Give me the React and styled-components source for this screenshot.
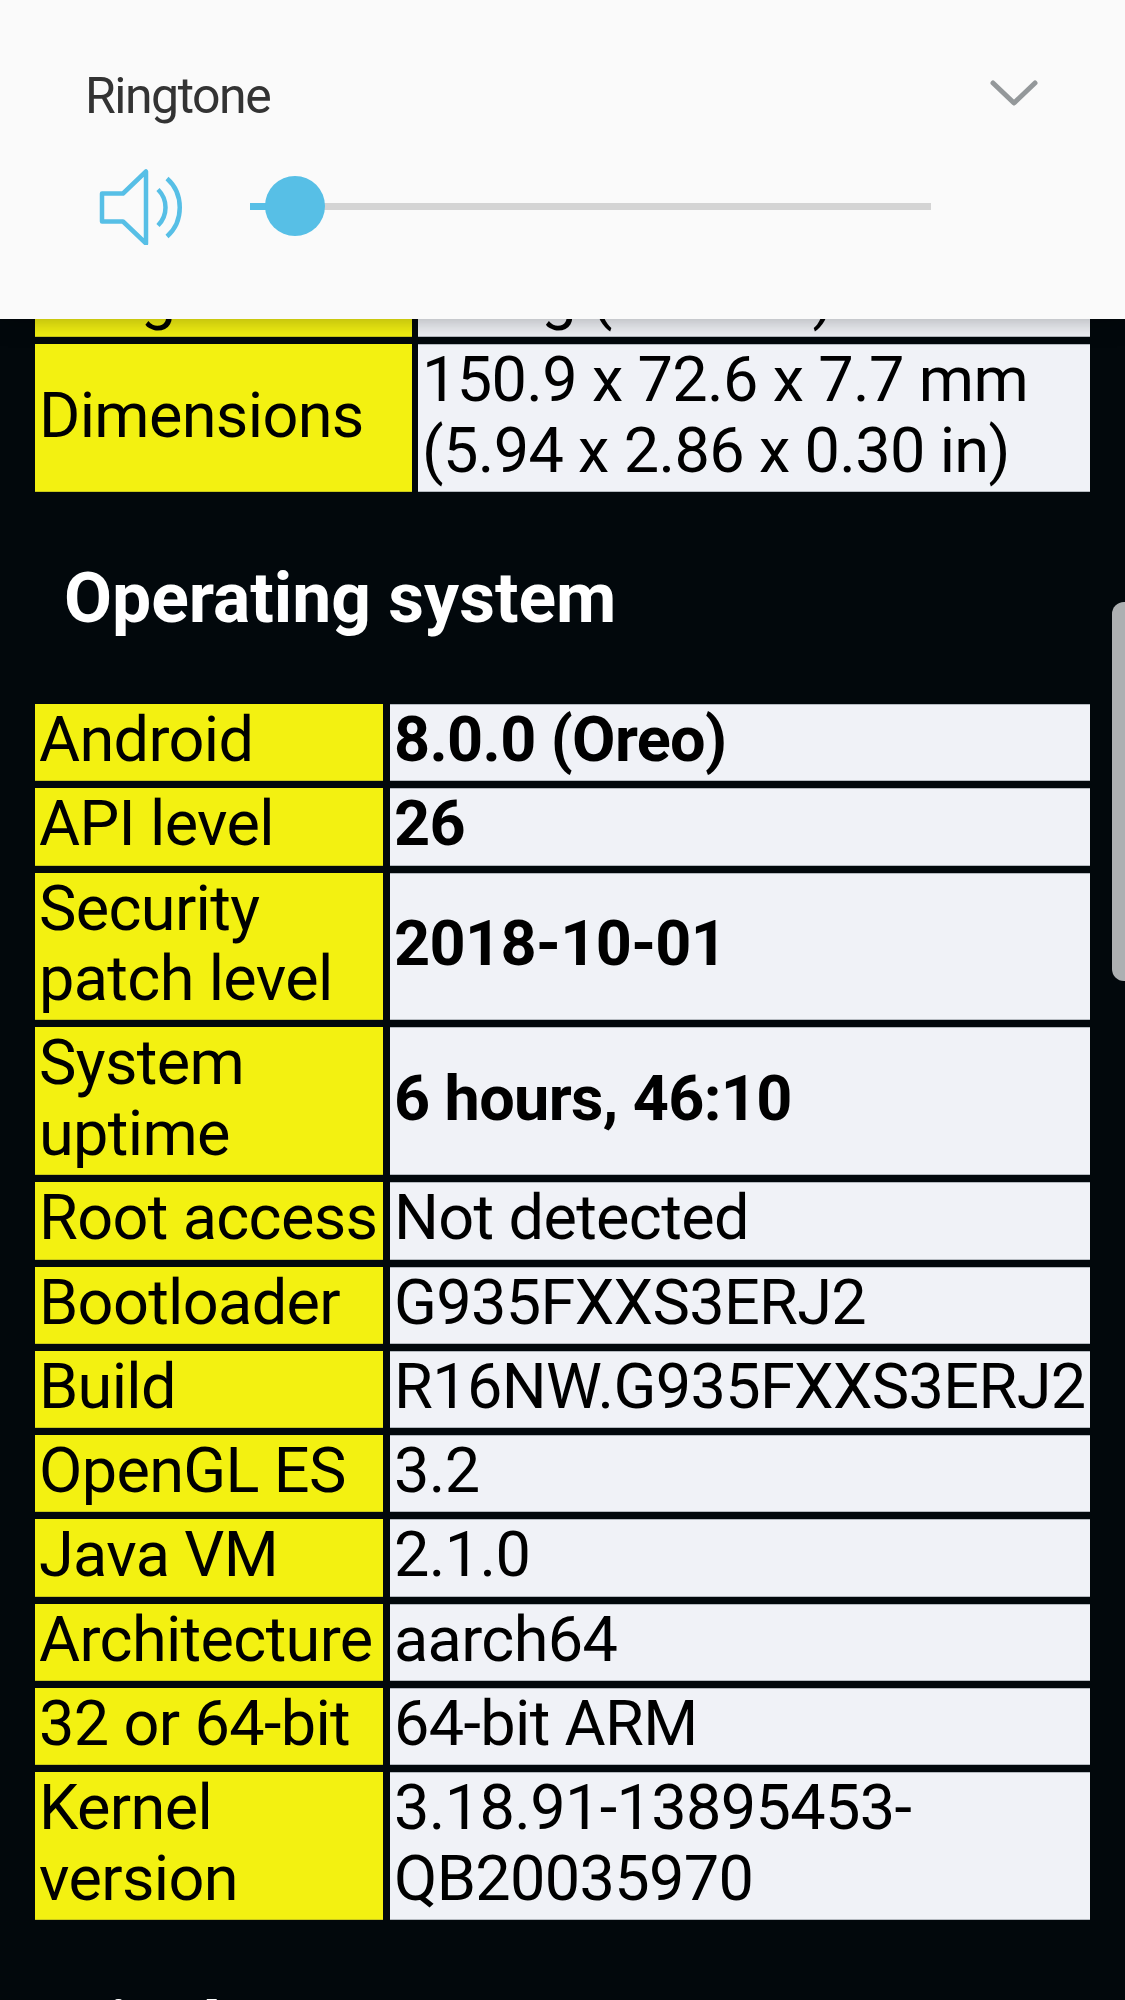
import React from 'react';
import styled, { createGlobalStyle } from 'styled-components';

const GlobalStyle = createGlobalStyle`
  html, body {
    margin: 0;
    padding: 0;
    background: #02080c;
  }
`;

const Screen = styled.div`
  position: relative;
  width: 1125px;
  height: 2000px;
  overflow: hidden;
  background: #02080c;
  font-family: Roboto, "Liberation Sans", sans-serif;
`;

const VolumePanel = styled.div`
  position: absolute;
  top: 0;
  left: 0;
  right: 0;
  height: 319px;
  z-index: 2;
  box-sizing: border-box;
  padding: 66px 86px 0 85px;
  background: #fafafa;
  box-shadow: 0 0 24px rgba(0, 0, 0, 0.35);
`;

const PanelHead = styled.div`
  display: flex;
  justify-content: space-between;
  align-items: flex-start;
`;

const StreamName = styled.div`
  font-size: 50px;
  line-height: 56px;
  letter-spacing: -1.5px;
  color: #333;
  padding-top: 2px;
`;

const Chevron = styled.svg`
  width: 50px;
  height: 28px;
  margin-top: 13px;
`;

const SliderRow = styled.div`
  display: flex;
  align-items: center;
  margin: 43px 0 0 14px;
`;

const SpeakerIcon = styled.svg`
  width: 84px;
  height: 78px;
  flex: none;
`;

const Track = styled.div`
  position: relative;
  width: 681px;
  height: 7px;
  margin-left: 67px;
  background: #d4d4d4;
`;

const TrackFill = styled.div`
  height: 100%;
  width: 45px;
  background: #57bfe6;
`;

const Thumb = styled.div`
  position: absolute;
  left: 15px;
  top: -27px;
  width: 60px;
  height: 60px;
  border-radius: 50%;
  background: #57bfe6;
`;

const Page = styled.div`
  padding: 260px 35px 0;
`;

const SpecTable = styled.div`
  display: flex;
  flex-direction: column;
  gap: 7px;
`;

const SpecRow = styled.div`
  display: grid;
  grid-template-columns: ${(p) => p.$labelWidth}px minmax(0, 1fr);
  gap: ${(p) => p.$gap}px;
`;

const Cell = styled.div`
  display: flex;
  align-items: center;
  box-sizing: border-box;
  padding: 1px 2px 5.8px 4px;
  font-size: 63px;
  line-height: 70.5px;
  letter-spacing: -0.65px;
  color: #000;
`;

const Label = styled(Cell)`
  background: #f3f111;
  box-shadow: inset 0 -1px 0 #c9c81a;
`;

const Value = styled(Cell)`
  background: #f0f2f7;
  font-weight: ${(p) => (p.$bold ? 700 : 400)};
  box-shadow: inset 0 1px 0 #b5bac0, inset 0 -1px 0 #b5bac0;
`;

const SectionTitle = styled.h2`
  margin: 0;
  padding: 66px 0 65px 29px;
  font-size: 69.6px;
  line-height: 81px;
  font-weight: 700;
  color: #fff;

  &:last-child {
    padding-top: 67px;
  }
`;

const ScrollHandle = styled.div`
  position: absolute;
  top: 602px;
  right: 0;
  width: 13px;
  height: 379px;
  border-radius: 12px 0 0 12px;
  background: #adb0b2;
`;

const deviceRows = [
  ['Weight', '157 g (5.54 oz)'],
  ['Dimensions', <>150.9 x 72.6 x 7.7 mm<br />(5.94 x 2.86 x 0.30 in)</>],
];

const systemRows = [
  ['Android', '8.0.0 (Oreo)', true],
  ['API level', '26', true],
  ['Security patch level', '2018-10-01', true],
  ['System uptime', '6 hours, 46:10', true],
  ['Root access', 'Not detected'],
  ['Bootloader', 'G935FXXS3ERJ2'],
  ['Build', 'R16NW.G935FXXS3ERJ2'],
  ['OpenGL ES', '3.2'],
  ['Java VM', '2.1.0'],
  ['Architecture', 'aarch64'],
  ['32 or 64-bit', '64-bit ARM'],
  ['Kernel version', '3.18.91-13895453-QB20035970'],
];

const App = () => (
  <Screen>
    <GlobalStyle />
    <VolumePanel>
      <PanelHead>
        <StreamName>Ringtone</StreamName>
        <Chevron viewBox="0 0 50 28" fill="none">
          <path d="M4 4 L25 24 L46 4" stroke="#94989a" strokeWidth="5" strokeLinecap="round" strokeLinejoin="round" />
        </Chevron>
      </PanelHead>
      <SliderRow>
        <SpeakerIcon viewBox="0 -2.5 84 78" fill="none" stroke="#57bfe6" strokeWidth="4.5" strokeLinejoin="round">
          <path d="M3 24 H24 L47 2 V74 L24 52 H3 Z" />
          <path d="M59 20 C69 30 69 46 59 56" />
          <path d="M68 9 C85 24 85 52 68 67" />
        </SpeakerIcon>
        <Track>
          <TrackFill />
          <Thumb />
        </Track>
      </SliderRow>
    </VolumePanel>

    <Page>
      <SpecTable>
        {deviceRows.map(([label, value]) => (
          <SpecRow key={label} $labelWidth={377} $gap={6}>
            <Label>{label}</Label>
            <Value>{value}</Value>
          </SpecRow>
        ))}
      </SpecTable>
      <SectionTitle>Operating system</SectionTitle>
      <SpecTable>
        {systemRows.map(([label, value, bold]) => (
          <SpecRow key={label} $labelWidth={348} $gap={7}>
            <Label>{label}</Label>
            <Value $bold={bold}>{value}</Value>
          </SpecRow>
        ))}
      </SpecTable>
      <SectionTitle>Display</SectionTitle>
    </Page>
    <ScrollHandle />
  </Screen>
);

export default App;
